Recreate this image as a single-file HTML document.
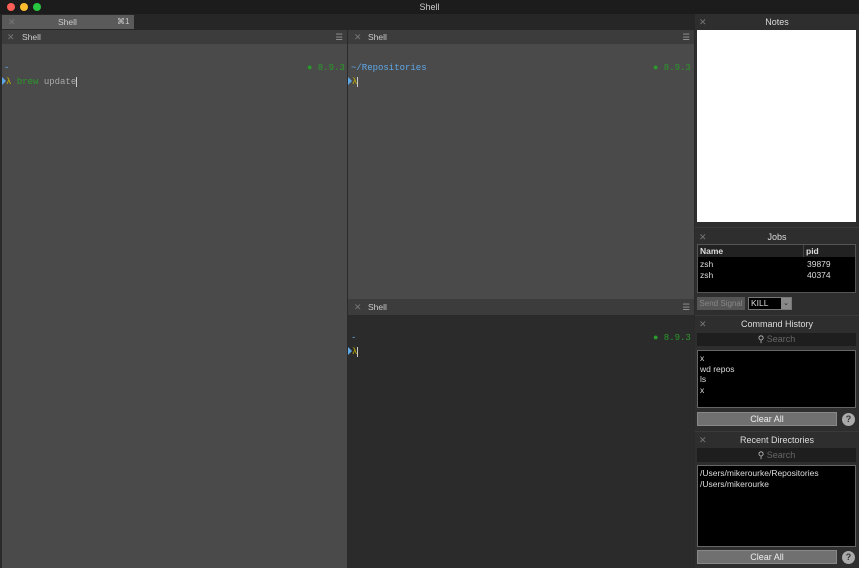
<!DOCTYPE html><html><head><style>
*{margin:0;padding:0;box-sizing:border-box}
body{width:859px;height:568px;background:#2a2a2a;font-family:"Liberation Sans",sans-serif;font-size:8.5px;color:#ddd;position:relative;overflow:hidden}
.a{position:absolute}
.mono{font-family:"Liberation Mono",monospace;font-size:9px}
.x{color:#777;font-size:9px}
.hdr{text-align:center;color:#ddd;font-size:9px}
.lam{color:#c8b400}
.tri{display:inline-block;width:0;height:0;border-left:4px solid #5fa8e8;border-top:4px solid transparent;border-bottom:4px solid transparent;vertical-align:-1px}
.btn{background:#707070;border:1px solid #888;color:#eee;text-align:center;font-size:9px;line-height:13px}
.q{width:13px;height:13px;border-radius:50%;background:#aaa;color:#333;font-weight:bold;text-align:center;line-height:13px;font-size:9px}
.ph{font-size:8.5px;color:#ccc}
</style></head><body>
<div class="a" style="left:0;top:0;width:859px;height:14px;background:#1c1c1c;text-align:center;line-height:14px;font-size:9px;color:#ccc">Shell</div>
<div class="a" style="left:7px;top:3px;width:8px;height:8px;border-radius:50%;background:#fe5f57"></div>
<div class="a" style="left:20px;top:3px;width:8px;height:8px;border-radius:50%;background:#febc2e"></div>
<div class="a" style="left:33px;top:3px;width:8px;height:8px;border-radius:50%;background:#28c840"></div>
<div class="a" style="left:0;top:14px;width:695px;height:16px;background:#262626"></div>
<div class="a ph" style="left:2px;top:15px;width:132px;height:14px;background:#5a5a5a;line-height:14px"><span class="x" style="position:absolute;left:6px">✕</span><span style="position:absolute;left:56px">Shell</span><span style="position:absolute;left:115px;font-size:8px">⌘1</span></div>
<div class="a ph" style="left:2px;top:30px;width:345px;height:14px;background:#3c3c3c;line-height:14px"><span class="x" style="position:absolute;left:5px">✕</span><span style="position:absolute;left:20px">Shell</span><span style="position:absolute;right:4px;color:#999">☰</span></div>
<div class="a" style="left:2px;top:44px;width:345px;height:524px;background:#4a4a4a"></div>
<div class="a mono" style="left:4px;top:63px;color:#5fa8e8">-</div>
<div class="a mono" style="left:307px;top:63px;color:#2a9a2a">● 8.9.3</div>
<div class="a mono" style="left:2px;top:77px"><span class="tri"></span><span class="lam">λ</span> <span style="color:#2a9a2a">brew</span> <span style="color:#aaa">update</span><span style="border-left:1px solid #ccc"> </span></div>
<div class="a ph" style="left:348px;top:30px;width:346px;height:14px;background:#3c3c3c;line-height:14px"><span class="x" style="position:absolute;left:6px">✕</span><span style="position:absolute;left:20px">Shell</span><span style="position:absolute;right:4px;color:#999">☰</span></div>
<div class="a" style="left:348px;top:44px;width:346px;height:255px;background:#4a4a4a"></div>
<div class="a mono" style="left:351px;top:63px;color:#5fa8e8">~/Repositories</div>
<div class="a mono" style="left:653px;top:63px;color:#2a9a2a">● 8.9.3</div>
<div class="a mono" style="left:348px;top:77px"><span class="tri"></span><span class="lam">λ</span> <span style="border-left:1px solid #ccc"> </span></div>
<div class="a ph" style="left:348px;top:299px;width:346px;height:16px;background:#3c3c3c;line-height:16px"><span class="x" style="position:absolute;left:6px">✕</span><span style="position:absolute;left:20px">Shell</span><span style="position:absolute;right:4px;color:#999">☰</span></div>
<div class="a" style="left:348px;top:315px;width:346px;height:253px;background:#2b2b2b"></div>
<div class="a mono" style="left:351px;top:333px;color:#5fa8e8">-</div>
<div class="a mono" style="left:653px;top:333px;color:#2a9a2a">● 8.9.3</div>
<div class="a mono" style="left:348px;top:347px"><span class="tri"></span><span class="lam">λ</span> <span style="border-left:1px solid #ccc"> </span></div>
<div class="a" style="left:695px;top:14px;width:164px;height:554px;background:#2e2e2e"></div>
<div class="a hdr" style="left:695px;top:15px;width:164px;line-height:14px"><span class="x" style="position:absolute;left:4px">✕</span>Notes</div>
<div class="a" style="left:697px;top:30px;width:159px;height:192px;background:#fff"></div>
<div class="a" style="left:695px;top:227px;width:164px;height:1px;background:#3a3a3a"></div>
<div class="a hdr" style="left:695px;top:230px;width:164px;line-height:14px"><span class="x" style="position:absolute;left:4px">✕</span>Jobs</div>
<div class="a" style="left:697px;top:244px;width:159px;height:49px;background:#000;border:1px solid #555"></div>
<div class="a" style="left:698px;top:245px;width:157px;height:12px;background:#222;font-weight:bold;line-height:12px"><span style="position:absolute;left:2px">Name</span><span style="position:absolute;left:105px;border-left:1px solid #444;padding-left:2px">pid</span></div>
<div class="a" style="left:700px;top:259px;line-height:10.5px">zsh<br>zsh</div>
<div class="a" style="left:807px;top:259px;line-height:10.5px">39879<br>40374</div>
<div class="a" style="left:697px;top:297px;width:48px;height:13px;background:#555;color:#888;text-align:center;line-height:13px;font-size:8px">Send Signal</div>
<div class="a" style="left:748px;top:297px;width:44px;height:13px;background:#000;border:1px solid #777;line-height:11px;padding-left:2px">KILL<span style="position:absolute;right:0;top:0;width:10px;height:11px;background:#888;color:#222;text-align:center;font-size:7px">⌄</span></div>
<div class="a" style="left:695px;top:315px;width:164px;height:1px;background:#3a3a3a"></div>
<div class="a hdr" style="left:695px;top:318px;width:164px;line-height:13px"><span class="x" style="position:absolute;left:4px">✕</span>Command History</div>
<div class="a" style="left:697px;top:333px;width:159px;height:13px;background:#1e1e1e;color:#666;text-align:center;line-height:13px;font-size:9px"><span style="color:#bbb">⚲</span> Search</div>
<div class="a" style="left:697px;top:350px;width:159px;height:58px;background:#000;border:1px solid #666;padding:2px 2px;line-height:10.5px">x<br>wd repos<br>ls<br>x</div>
<div class="a btn" style="left:697px;top:412px;width:140px;height:14px">Clear All</div>
<div class="a q" style="left:842px;top:413px">?</div>
<div class="a" style="left:695px;top:431px;width:164px;height:1px;background:#3a3a3a"></div>
<div class="a hdr" style="left:695px;top:434px;width:164px;line-height:13px"><span class="x" style="position:absolute;left:4px">✕</span>Recent Directories</div>
<div class="a" style="left:697px;top:448px;width:159px;height:14px;background:#1e1e1e;color:#666;text-align:center;line-height:14px;font-size:9px"><span style="color:#bbb">⚲</span> Search</div>
<div class="a" style="left:697px;top:465px;width:159px;height:82px;background:#000;border:1px solid #666;padding:2px 2px;line-height:10.5px">/Users/mikerourke/Repositories<br>/Users/mikerourke</div>
<div class="a btn" style="left:697px;top:550px;width:140px;height:14px">Clear All</div>
<div class="a q" style="left:842px;top:551px">?</div>
</body></html>
